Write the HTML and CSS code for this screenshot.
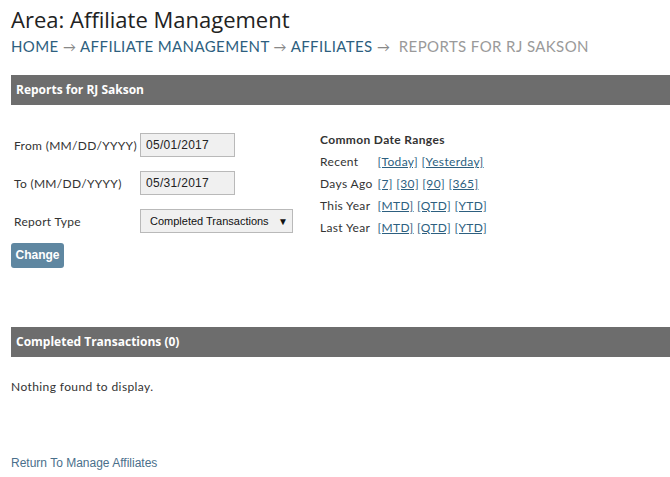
FILE: index.html
```html
<!DOCTYPE html>
<html lang="en">
<head>
    <meta charset="UTF-8">
    <title>Area: Affiliate Management</title>
    <link rel="stylesheet" href="styles.css">
</head>
<body>
    <!-- Page heading -->
    <h1 class="area-title">Area: Affiliate Management</h1>
    <div class="breadcrumb">
        <a href="#">Home</a> <span class="arrow">&rarr;</span>
        <a href="#">Affiliate Management</a> <span class="arrow">&rarr;</span>
        <a href="#">Affiliates</a> <span class="arrow">&rarr;</span>&nbsp;
        <span class="current">Reports for RJ Sakson</span>
    </div>

    <!-- Report filter -->
    <div class="bar">Reports for RJ Sakson</div>

    <div class="report-form">
        <div class="fields">
            <label>From (MM/DD/YYYY)</label>
            <input type="text" class="date-input" value="05/01/2017">
            <label>To (MM/DD/YYYY)</label>
            <input type="text" class="date-input" value="05/31/2017">
            <label>Report Type</label>
            <div class="select-box">
                <span>Completed Transactions</span>
                <span class="caret">&#9660;</span>
            </div>
            <button class="change-btn">Change</button>
        </div>

        <div class="ranges">
            <div class="ranges-title">Common Date Ranges</div>
            <div class="range-row">
                <span class="range-name">Recent</span>
                <a href="#">[Today]</a> <a href="#">[Yesterday]</a>
            </div>
            <div class="range-row">
                <span class="range-name">Days Ago</span>
                <a href="#">[7]</a> <a href="#">[30]</a> <a href="#">[90]</a> <a href="#">[365]</a>
            </div>
            <div class="range-row">
                <span class="range-name">This Year</span>
                <a href="#">[MTD]</a> <a href="#">[QTD]</a> <a href="#">[YTD]</a>
            </div>
            <div class="range-row">
                <span class="range-name">Last Year</span>
                <a href="#">[MTD]</a> <a href="#">[QTD]</a> <a href="#">[YTD]</a>
            </div>
        </div>
    </div>

    <!-- Results -->
    <div class="bar results-bar">Completed Transactions (0)</div>
    <p class="empty">Nothing found to display.</p>

    <a href="#" class="return-link">Return To Manage Affiliates</a>
</body>
</html>
```

FILE: styles.css
```css
/* Base */
body {
    margin: 0;
    padding: 0 0 0 11px;
    font-family: Lato, "Open Sans", sans-serif;
    color: #333;
    background: #fff;
}

a {
    color: #2d5f7f;
}

/* Heading */
.area-title {
    font-family: "Open Sans", sans-serif;
    font-weight: 400;
    font-size: 22px;
    color: #222;
    margin: 0;
    padding-top: 4px;
    line-height: 30px;
}

.breadcrumb {
    font-size: 15px;
    text-transform: uppercase;
    letter-spacing: 0.4px;
    margin-top: 2px;
    line-height: 20px;
    color: #888;
}

.breadcrumb a {
    color: #2d5f7f;
    text-decoration: none;
}

.breadcrumb .arrow {
    color: #888;
    font-size: 13px;
}

.breadcrumb .current {
    color: #9a9a9a;
}

/* Grey section bars */
.bar {
    background-color: #6d6d6d;
    color: #fff;
    font-family: "Open Sans", sans-serif;
    font-weight: 700;
    font-size: 12px;
    height: 30px;
    line-height: 30px;
    padding-left: 5px;
    margin-top: 18px;
}

/* Filter form */
.report-form {
    display: flex;
    padding-top: 28px;
}

.fields {
    display: grid;
    grid-template-columns: 129px auto;
    grid-auto-rows: 24px;
    row-gap: 14px;
    align-items: center;
    width: 309px;
    align-content: start;
}

.fields label {
    font-size: 12px;
    letter-spacing: 0.3px;
    padding-left: 3px;
    white-space: nowrap;
    color: #333;
}

.date-input {
    width: 95px;
    height: 24px;
    box-sizing: border-box;
    border: 1px solid #b9b9b9;
    background: #f0f0f0;
    font-family: Arial, "Liberation Sans", sans-serif;
    font-size: 12px;
    letter-spacing: 0.3px;
    padding: 0 0 0 5px;
    color: #222;
}

.select-box {
    width: 153px;
    height: 24px;
    box-sizing: border-box;
    border: 1px solid #b9b9b9;
    background: #f0f0f0;
    font-family: Arial, "Liberation Sans", sans-serif;
    font-size: 11px;
    color: #111;
    display: flex;
    align-items: center;
    justify-content: space-between;
    padding: 0 4px 0 9px;
}

.select-box .caret {
    font-size: 10px;
}

.change-btn {
    grid-column: 1 / 3;
    justify-self: start;
    margin-top: -8px;
    width: 53px;
    height: 25px;
    background: #5f87a1;
    color: #fff;
    border: none;
    border-radius: 3px;
    font-family: Arial, "Liberation Sans", sans-serif;
    font-weight: 700;
    font-size: 12px;
    padding: 0;
}

/* Date range shortcuts */
.ranges {
    font-size: 12px;
    letter-spacing: 0.35px;
    margin-top: -3px;
}

.ranges-title {
    font-weight: 700;
    line-height: 20px;
    margin-bottom: 1px;
}

.range-row {
    line-height: 22px;
}

.range-name {
    display: inline-block;
    min-width: 54px;
}

.ranges a {
    color: #2d5f7f;
}

/* Results */
.results-bar {
    margin-top: 56px;
}

.empty {
    font-size: 12px;
    letter-spacing: 0.4px;
    margin: 22px 0 0 0;
}

.return-link {
    display: inline-block;
    margin-top: 62px;
    font-family: Arial, "Liberation Sans", sans-serif;
    font-size: 12px;
    color: #4a6f8b;
    text-decoration: none;
}
```
